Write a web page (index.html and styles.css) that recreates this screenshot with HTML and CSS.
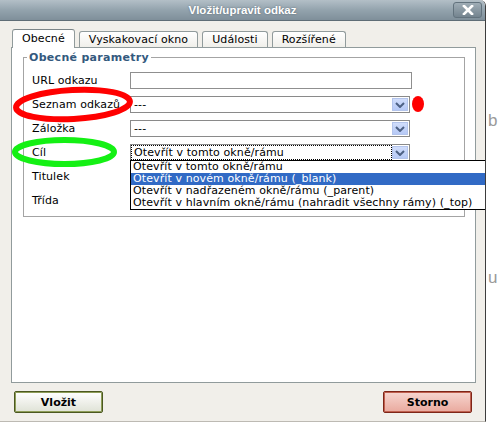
FILE: index.html
```html
<!DOCTYPE html>
<html>
  <head>
    <meta charset="UTF-8" />
    <title>Vložit/upravit odkaz</title>
    <link rel="stylesheet" href="styles.css">
  </head>
  <body>
    <div class="window">
      <div class="titlebar">
        <span class="title">Vložit/upravit odkaz</span>
        <span class="close">
          <svg width="12" height="10" viewBox="0 0 12 10">
            <path d="M2 1 L10 9 M10 1 L2 9" stroke="#fff" stroke-width="2.6" stroke-linecap="square" />
          </svg>
        </span>
      </div>
      <div class="body">
        <div class="tabs">
          <div class="tab active">Obecné</div>
          <div class="tab">Vyskakovací okno</div>
          <div class="tab">Události</div>
          <div class="tab">Rozšířené</div>
        </div>
        <div class="panel">
          <fieldset>
            <legend>Obecné parametry</legend>
            <div class="row">
              <label>URL odkazu</label>
              <input class="text" type="text">
            </div>
            <div class="row">
              <label>Seznam odkazů</label>
              <div class="select">
                <span class="value">---</span>
                <span class="arrow"><svg width="10" height="6" viewBox="0 0 10 6"><path d="M1 1 L5 5 L9 1" fill="none" stroke="#4d6185" stroke-width="2" /></svg></span>
              </div>
            </div>
            <div class="row">
              <label>Záložka</label>
              <div class="select">
                <span class="value">---</span>
                <span class="arrow"><svg width="10" height="6" viewBox="0 0 10 6"><path d="M1 1 L5 5 L9 1" fill="none" stroke="#4d6185" stroke-width="2" /></svg></span>
              </div>
            </div>
            <div class="row">
              <label>Cíl</label>
              <div class="select open">
                <span class="value focus">Otevřít v tomto okně/rámu</span>
                <span class="arrow"><svg width="10" height="6" viewBox="0 0 10 6"><path d="M1 1 L5 5 L9 1" fill="none" stroke="#4d6185" stroke-width="2" /></svg></span>
                <ul class="options">
                  <li>Otevřít v tomto okně/rámu</li>
                  <li class="selected">Otevřít v novém okně/rámu (_blank)</li>
                  <li>Otevřít v nadřazeném okně/rámu (_parent)</li>
                  <li>Otevřít v hlavním okně/rámu (nahradit všechny rámy) (_top)</li>
                </ul>
              </div>
            </div>
            <div class="row">
              <label>Titulek</label>
              <input class="text" type="text">
            </div>
            <div class="row">
              <label>Třída</label>
              <input class="text" type="text">
            </div>
          </fieldset>
        </div>
        <div class="buttons">
          <button class="btn insert">Vložit</button>
          <button class="btn cancel">Storno</button>
        </div>
      </div>
    </div>
    <div class="behind">
      <span>b</span>
      <span class="u">u</span>
    </div>
    <!-- pen marks drawn over the dialog -->
    <svg class="marks" width="498" height="423" viewBox="0 0 498 423">
      <ellipse cx="73" cy="104.5" rx="57" ry="14.5" fill="none" stroke="#ff0000" stroke-width="6" transform="rotate(-3 73 104.5)" />
      <ellipse cx="418" cy="104" rx="6" ry="8" fill="#ff0000" />
      <ellipse cx="64.5" cy="152" rx="49.5" ry="12" fill="none" stroke="#14f014" stroke-width="6" />
      <ellipse cx="387" cy="168" rx="19" ry="3.5" fill="#14f014" />
      <ellipse cx="364" cy="180.5" rx="17" ry="3.5" fill="#14f014" />
    </svg>
  </body>
</html>
```

FILE: styles.css
```css
* {
  box-sizing: border-box;
}
body {
  margin: 0;
  width: 498px;
  height: 423px;
  overflow: hidden;
  display: flex;
  position: relative;
  background: #ffffff;
  font-family: "DejaVu Sans", Verdana, sans-serif;
  font-size: 11px;
  letter-spacing: 0.1px;
  color: #000000;
}
.window {
  width: 486px;
  height: 422px;
  flex: none;
  display: flex;
  flex-direction: column;
  border-right: 1px solid #3d3d3d;
  border-bottom: 1px solid #bdbab3;
  border-top-right-radius: 6px;
  overflow: hidden;
}
.titlebar {
  height: 21px;
  flex: none;
  display: grid;
  grid-template-columns: 1fr auto 1fr;
  align-items: center;
  background: linear-gradient(#b3bfc7, #93a3ad 50%, #7f8f9a);
  border-bottom: 1px solid #5f6d76;
}
.title {
  grid-column: 2;
  color: #ffffff;
  font-family: "Liberation Sans", Arial, sans-serif;
  font-weight: bold;
  font-size: 11.5px;
  letter-spacing: 0;
  text-shadow: 0 0 2px #5a6a74;
}
.close {
  grid-column: 3;
  justify-self: end;
  margin-right: 3px;
  width: 29px;
  height: 16px;
  display: flex;
  align-items: center;
  justify-content: center;
  border: 1px solid #63737e;
  border-radius: 3px;
  background: linear-gradient(#9fadb6, #74848f);
}
.body {
  flex: 1;
  display: flex;
  flex-direction: column;
  padding: 8px 9px 8px 11px;
  background: #f1efea;
}
.tabs {
  height: 18px;
  flex: none;
  display: flex;
  align-items: flex-end;
  gap: 4px;
  padding-left: 1px;
}
.tab {
  height: 16px;
  padding: 0 9px;
  line-height: 15px;
  border: 1px solid #919b9c;
  border-bottom: none;
  border-radius: 3px 3px 0 0;
  background: linear-gradient(#ffffff, #f0efea);
  white-space: nowrap;
}
.tab.active {
  height: 19px;
  margin-bottom: -1px;
  line-height: 18px;
  position: relative;
  z-index: 1;
  background: #ffffff;
  border-top-color: #7b8588;
}
.panel {
  flex: 1;
  border: 1px solid #919b9c;
  background: #ffffff;
  padding: 3px 10px 0 11px;
}
fieldset {
  margin: 0;
  padding: 8px 0 7px 8px;
  border: 1px solid #a4a4a4;
}
legend {
  margin-left: -5px;
  padding: 0 2px;
  line-height: 13px;
  font-weight: bold;
  letter-spacing: 0.3px;
  color: #33597e;
}
.row {
  display: flex;
  align-items: center;
  height: 17px;
}
.row + .row {
  margin-top: 7px;
}
.row label {
  width: 98px;
  flex: none;
}
.text {
  width: 282px;
  height: 17px;
  margin: 0;
  padding: 0 2px;
  border: 1px solid #8f8f8f;
  font: inherit;
}
.select {
  width: 280px;
  height: 17px;
  display: flex;
  position: relative;
  border: 1px solid #8a8a8a;
  background: #ffffff;
}
.select .value {
  flex: 1;
  margin: 1px 0 1px 1px;
  padding-left: 2px;
  line-height: 13px;
  white-space: nowrap;
}
.select .value.focus {
  outline: 1px dotted #000000;
}
.select .arrow {
  width: 16px;
  margin: 1px;
  display: flex;
  align-items: center;
  justify-content: center;
  background: linear-gradient(#d0ddfb, #b6c9f6);
  border: 1px solid #b3c4ec;
}
.options {
  position: absolute;
  top: 100%;
  left: -1px;
  width: 358px;
  margin: 0;
  padding: 0;
  list-style: none;
  border: 1px solid #000000;
  background: #ffffff;
  z-index: 2;
}
.options li {
  height: 12px;
  padding-left: 2px;
  line-height: 12px;
  white-space: nowrap;
}
.options li.selected {
  background: #316ac5;
  color: #ffffff;
}
.buttons {
  flex: none;
  display: flex;
  justify-content: space-between;
  margin-top: 8px;
  padding: 0 4px 0 3px;
}
.btn {
  width: 89px;
  height: 22px;
  padding: 0;
  border-radius: 2px;
  font-family: "DejaVu Sans", Verdana, sans-serif;
  font-size: 11px;
  font-weight: bold;
  color: #000000;
}
.insert {
  border: 1px solid #4b5820;
  box-shadow: inset 0 0 0 1px #8e9d58;
  background: linear-gradient(#ffffff, #dfe2d6);
}
.cancel {
  border: 1px solid #7e2518;
  box-shadow: inset 0 0 0 1px #c0604f;
  background: linear-gradient(#f7d6d0, #e9a99e);
}
.behind {
  flex: 1;
  display: flex;
  flex-direction: column;
  padding: 111px 0 0 2px;
  font-family: "Liberation Sans", Arial, sans-serif;
  font-size: 17px;
  line-height: 20px;
  color: #9a9a9a;
}
.behind .u {
  margin-top: 137px;
}
.marks {
  position: absolute;
  top: 0;
  left: 0;
  pointer-events: none;
}
```
